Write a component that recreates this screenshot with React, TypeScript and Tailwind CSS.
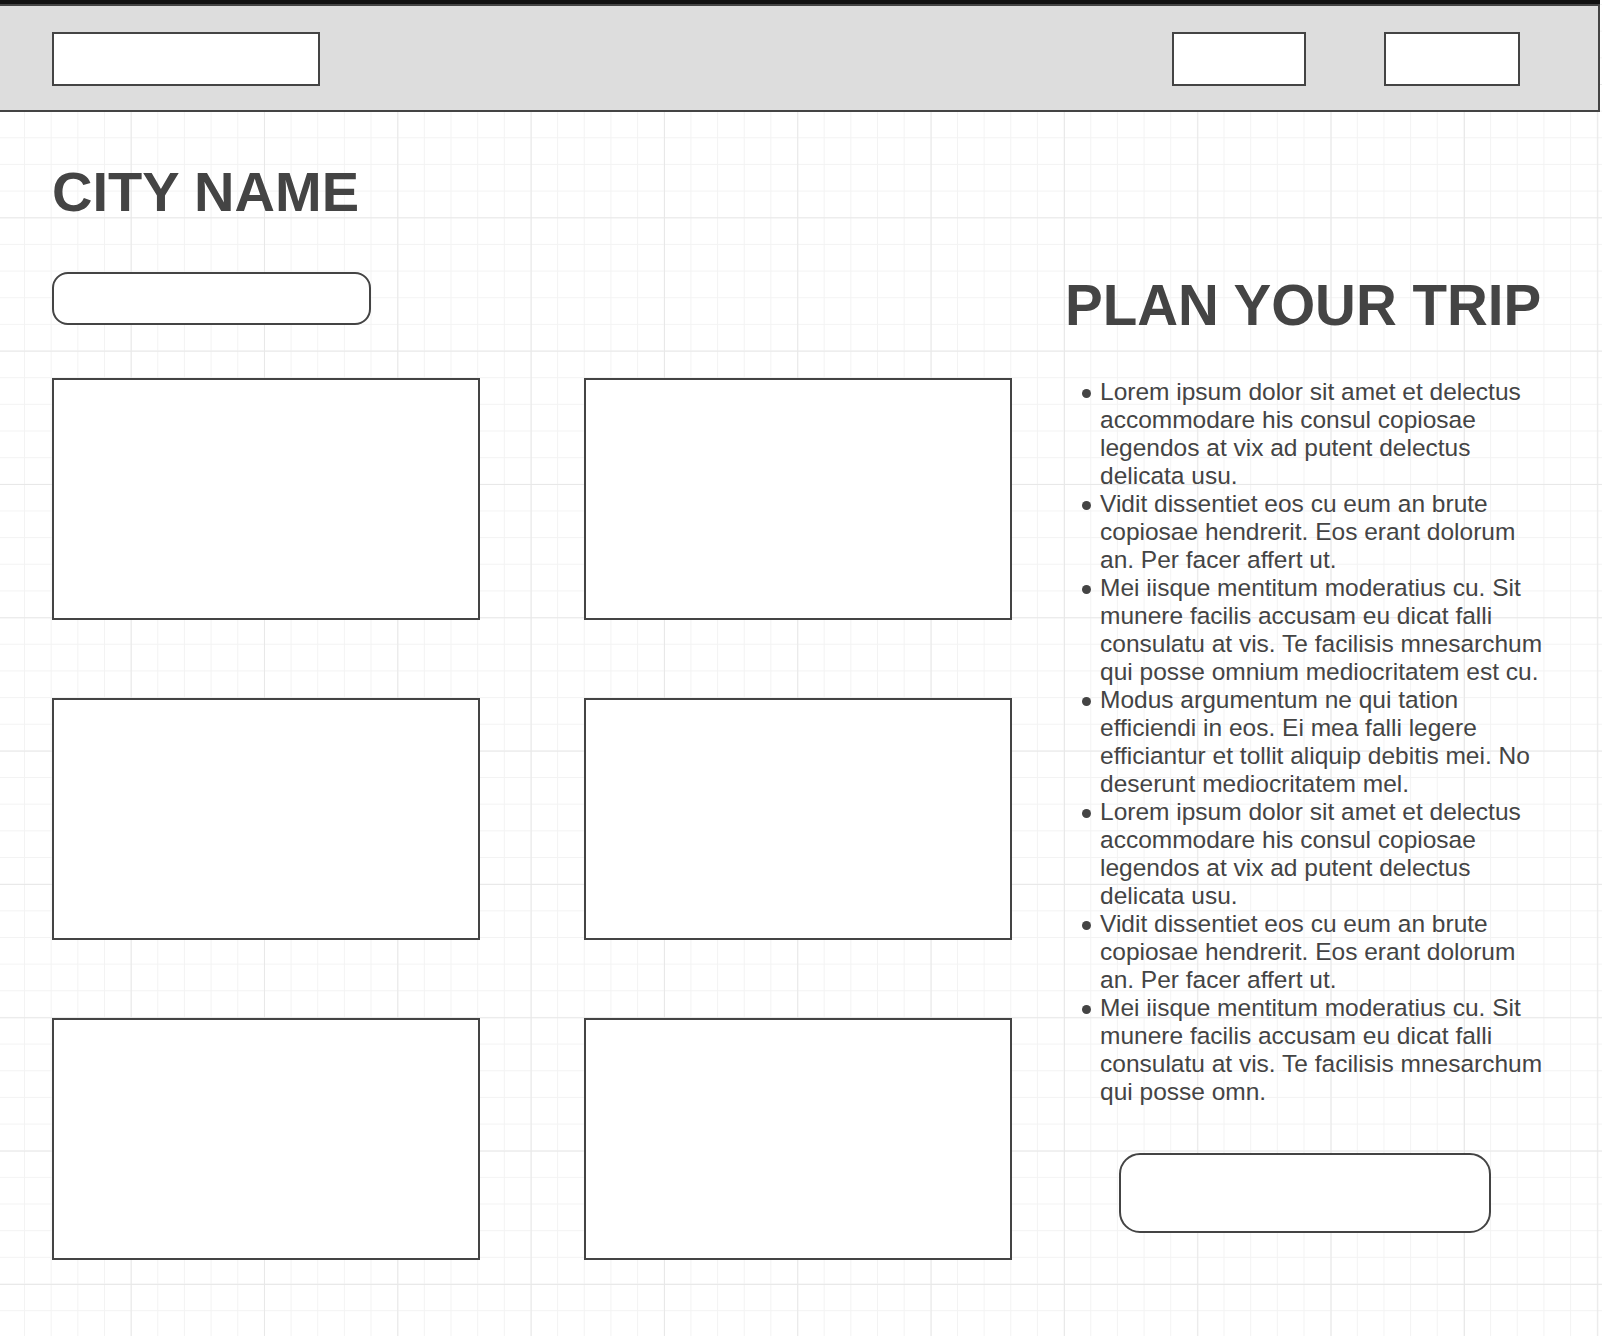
import React from "react"

const tips = [
  "Lorem ipsum dolor sit amet et delectus accommodare his consul copiosae legendos at vix ad putent delectus delicata usu.",
  "Vidit dissentiet eos cu eum an brute copiosae hendrerit. Eos erant dolorum an. Per facer affert ut.",
  "Mei iisque mentitum moderatius cu. Sit munere facilis accusam eu dicat falli consulatu at vis. Te facilisis mnesarchum qui posse omnium mediocritatem est cu.",
  "Modus argumentum ne qui tation efficiendi in eos. Ei mea falli legere efficiantur et tollit aliquip debitis mei. No deserunt mediocritatem mel.",
  "Lorem ipsum dolor sit amet et delectus accommodare his consul copiosae legendos at vix ad putent delectus delicata usu.",
  "Vidit dissentiet eos cu eum an brute copiosae hendrerit. Eos erant dolorum an. Per facer affert ut.",
  "Mei iisque mentitum moderatius cu. Sit munere facilis accusam eu dicat falli consulatu at vis. Te facilisis mnesarchum qui posse omn.",
]

const cards = [1, 2, 3, 4, 5, 6]

export default function App() {
  return (
    <div className="min-h-[1336px] w-full bg-white font-['Liberation_Sans',Arial,sans-serif] text-[#444] bg-[linear-gradient(to_right,#e8e8e8_1px,transparent_1px),linear-gradient(to_bottom,#e8e8e8_1px,transparent_1px),linear-gradient(to_right,#f3f3f3_1px,transparent_1px),linear-gradient(to_bottom,#f3f3f3_1px,transparent_1px)] [background-size:133.333px_133.333px,133.333px_133.333px,26.667px_26.667px,26.667px_26.667px] [background-position:-2.67px_0,0_84px,-2.67px_0,0_4px]">
      {/* top bar */}
      <div className="h-[4px] w-[1600px] bg-[#111]" />
      <header className="flex h-[108px] w-[1600px] items-start justify-between border-y-2 border-r-2 border-[#444] bg-[#dddddd] pl-[52px] pr-[78px] pt-[26px]">
        <div className="h-[54px] w-[268px] border-2 border-[#444] bg-white" />
        <div className="flex gap-[78px]">
          <div className="h-[54px] w-[134px] border-2 border-[#444] bg-white" />
          <div className="h-[54px] w-[136px] border-2 border-[#444] bg-white" />
        </div>
      </header>

      <main className="flex items-start pl-[52px]">
        {/* left column */}
        <section className="w-[960px] pt-[52px]">
          <h1 className="text-[56px] font-bold leading-none">CITY NAME</h1>
          <div className="mt-[52px] h-[53px] w-[319px] rounded-[16px] border-2 border-[#444] bg-white" />
          <div className="mt-[53px] grid grid-cols-[428px_428px] gap-x-[104px] gap-y-[78px]">
            {cards.map((c) => (
              <div key={c} className="h-[242px] border-2 border-[#444] bg-white" />
            ))}
          </div>
        </section>

        {/* right column */}
        <aside className="ml-[53px] w-[500px] pt-[166px]">
          <h2 className="text-[56.5px] font-bold leading-[56px]">PLAN YOUR TRIP</h2>
          <ul className="mt-[44px]">
            {tips.map((t, i) => (
              <li key={i} className="flex text-[24.5px] leading-[28px]">
                <span className="w-[35px] shrink-0 pl-[17px] pt-[11px]">
                  <span className="block h-[9px] w-[9px] rounded-full bg-[#444]" />
                </span>
                <span className="w-[450px]">{t}</span>
              </li>
            ))}
          </ul>
          <div className="ml-[54px] mt-[47px] h-[80px] w-[372px] rounded-[21px] border-2 border-[#444] bg-white" />
        </aside>
      </main>
    </div>
  )
}
